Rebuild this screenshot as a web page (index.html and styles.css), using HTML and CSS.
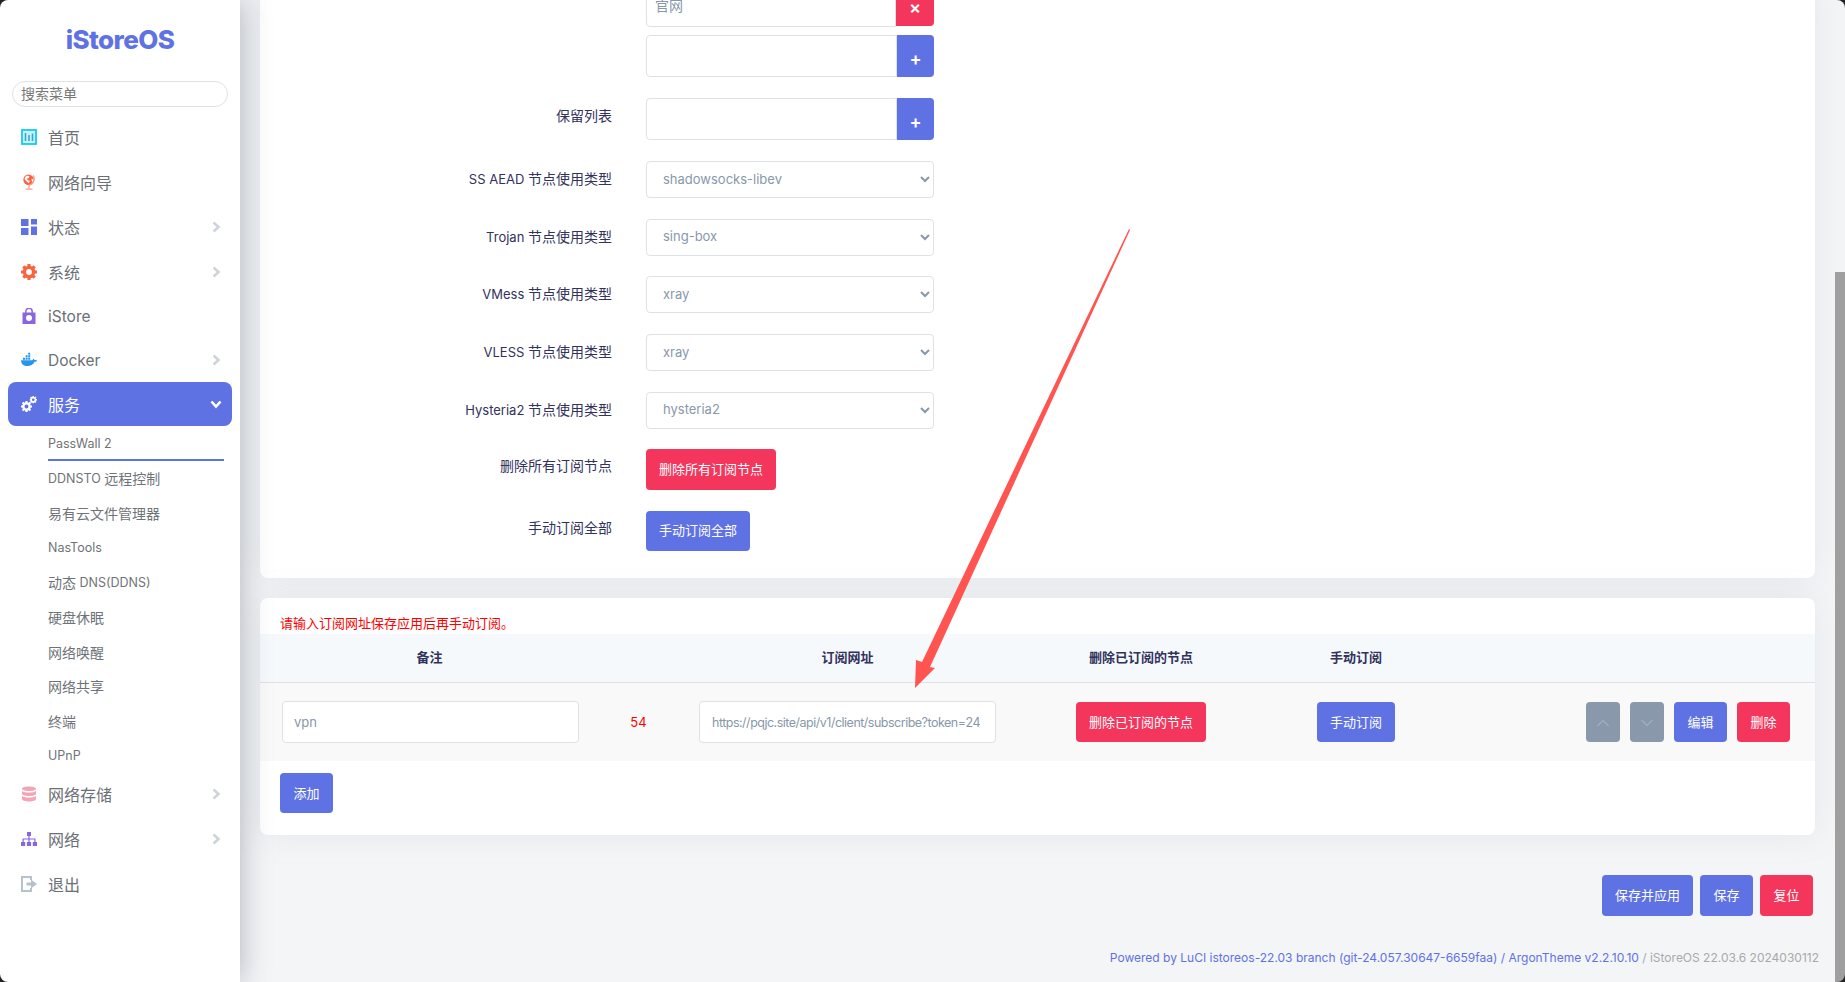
FILE: index.html
```html
<!DOCTYPE html>
<html lang="zh">
<head>
<meta charset="UTF-8">
<title>PassWall 2 - iStoreOS</title>
<link rel="stylesheet" href="styles.css">
</head>
<body>
<svg class="sprite" width="0" height="0">
  <symbol id="gear" viewBox="0 0 16 16">
    <circle cx="8" cy="8" r="4.6" fill="none" stroke="currentColor" stroke-width="3.4"/>
    <path d="M8 0v3M8 13v3M0 8h3M13 8h3M2.300 2.300l2.200 2.200M11.500 11.500l2.200 2.200M2.300 13.700l2.200-2.200M11.500 4.500l2.200-2.200" fill="none" stroke="currentColor" stroke-width="3.200"/>
  </symbol>
  <symbol id="chev" viewBox="0 0 10 12">
    <path d="M2.500 1.500 7.500 6l-5 4.500" fill="none" stroke="currentColor" stroke-width="2.600"/>
  </symbol>
</svg>

<aside class="sidebar">
  <div class="brand">iStoreOS</div>
  <input class="menu-search" type="text" placeholder="搜索菜单">
  <nav class="nav">
    <a class="nav-link">
      <svg class="nav-icon" viewBox="0 0 16 16"><rect x="1" y="1" width="14" height="14" fill="#c9f3fb" stroke="#11cdef" stroke-width="1.800"/><path d="M4.500 4v8M8 6v6M11.500 4.500V12" stroke="#3aa6d8" stroke-width="1.600"/></svg>
      首页
    </a>
    <a class="nav-link">
      <svg class="nav-icon" viewBox="0 0 16 16"><circle cx="7.500" cy="5.800" r="5.200" fill="#fb6340"/><path d="M5 2.300c1.500-.7 3-.5 3.500.3L7.500 4.300 5.800 4.800l1 1.500 2 .5L8 9.300 6.500 8.300 4 5.800 3.500 4.300zM10.500 4.800l1.500.5.300 1.500-1.300 1.500z" fill="#fff"/><path d="M12 1.500c2.500 3 1 8.500-4 10M8 11.500v3M4.500 15.200h7" fill="none" stroke="#f7a08a" stroke-width="1.300"/></svg>
      网络向导
    </a>
    <a class="nav-link">
      <svg class="nav-icon" viewBox="0 0 16 16"><path d="M0 0h7.500v7H0zM10 0h6v5.500h-6zM0 9h7.500v7H0zM10 7.500h6V16h-6z" fill="#5e72e4"/></svg>
      状态
      <svg class="nav-chev"><use href="#chev"/></svg>
    </a>
    <a class="nav-link">
      <svg class="nav-icon icon-gear"><use href="#gear"/></svg>
      系统
      <svg class="nav-chev"><use href="#chev"/></svg>
    </a>
    <a class="nav-link latin">
      <svg class="nav-icon" viewBox="0 0 16 16"><path d="M4.800 5V3.500a3.200 3.200 0 0 1 6.400 0V5" fill="none" stroke="#8965e0" stroke-width="1.500"/><path d="M1.500 4.500h13V16h-13zM8 7a3 3 0 1 0 0 6 3 3 0 0 0 0-6z" fill="#8965e0" fill-rule="evenodd"/></svg>
      iStore
    </a>
    <a class="nav-link latin">
      <svg class="nav-icon" viewBox="0 0 16 16"><path d="M0 8.200h11.200c.5-.1.900-.6.900-1.500.9.200 1.300.8 1.400 1.300.8-.2 1.600-.1 2.500.4-.6 1.100-1.500 1.400-2.500 1.400C12.300 13 9.500 14 6.500 14 2.800 14 .4 12.400 0 8.200z" fill="#2496ed"/><path d="M2 5.800h2v2H2zM4.600 5.800h2v2h-2zM7.200 5.800h2v2h-2zM4.600 3.300h2v2h-2zM7.200 3.300h2v2h-2zM7.200.8h2v2h-2z" fill="#2496ed"/></svg>
      Docker
      <svg class="nav-chev"><use href="#chev"/></svg>
    </a>
    <a class="nav-link active">
      <svg class="nav-icon" viewBox="0 0 16 16"><use href="#gear" x="0" y="5" width="11" height="11"/><use href="#gear" x="8.500" y="0" width="7.500" height="7.500"/></svg>
      服务
      <svg class="nav-chev open"><use href="#chev"/></svg>
    </a>
    <div class="subnav">
      <a class="sub-link current"><span class="lat">PassWall 2</span></a>
      <a class="sub-link"><span class="lat">DDNSTO&nbsp;</span>远程控制</a>
      <a class="sub-link">易有云文件管理器</a>
      <a class="sub-link"><span class="lat">NasTools</span></a>
      <a class="sub-link">动态<span class="lat">&nbsp;DNS(DDNS)</span></a>
      <a class="sub-link">硬盘休眠</a>
      <a class="sub-link">网络唤醒</a>
      <a class="sub-link">网络共享</a>
      <a class="sub-link">终端</a>
      <a class="sub-link"><span class="lat">UPnP</span></a>
    </div>
    <a class="nav-link">
      <svg class="nav-icon" viewBox="0 0 16 16"><path d="M1 2.800C1 1.300 4.300.5 8 .5s7 .8 7 2.300S11.700 5 8 5 1 4.300 1 2.800zM1 5c1.500 1.200 4 1.600 7 1.600S13.500 6.200 15 5v2.800C15 9.300 11.700 10 8 10S1 9.300 1 7.800zM1 10c1.500 1.200 4 1.600 7 1.600s5.500-.4 7-1.600v3c0 1.500-3.300 2.500-7 2.500S1 14.500 1 13z" fill="#f3a4b5"/></svg>
      网络存储
      <svg class="nav-chev"><use href="#chev"/></svg>
    </a>
    <a class="nav-link">
      <svg class="nav-icon" viewBox="0 0 16 16"><path d="M6 1h4v4H6zM0 11h4.200v4H0zM5.900 11h4.200v4H5.900zM11.800 11H16v4h-4.200z" fill="#8965e0"/><path d="M8 5v6M2.100 11V8h11.800v3" fill="none" stroke="#8965e0" stroke-width="1.200"/></svg>
      网络
      <svg class="nav-chev"><use href="#chev"/></svg>
    </a>
    <a class="nav-link">
      <svg class="nav-icon" viewBox="0 0 16 16"><path d="M10 4V1H1v14h9v-3" fill="none" stroke="#b7c1cc" stroke-width="2"/><path d="M5.500 6.500H10V3.500L16 8l-6 4.500v-3H5.500z" fill="#b7c1cc"/></svg>
      退出
    </a>
  </nav>
</aside>

<main class="main">
  <section class="card card-form">
    <div class="form-row">
      <div class="form-label"></div>
      <div class="dyn-item">
        <input class="text-input raised" type="text" value="官网">
        <button class="btn-icon btn-danger wide">×</button>
      </div>
    </div>
    <div class="form-row tight">
      <div class="form-label"></div>
      <div class="dyn-item">
        <input class="text-input" type="text">
        <button class="btn-icon btn-primary">+</button>
      </div>
    </div>
    <div class="form-row">
      <div class="form-label up">保留列表</div>
      <div class="dyn-item">
        <input class="text-input" type="text">
        <button class="btn-icon btn-primary">+</button>
      </div>
    </div>
    <div class="form-row select-row">
      <div class="form-label"><span class="lat">SS AEAD&nbsp;</span>节点使用类型</div>
      <select class="select-input"><option>shadowsocks-libev</option></select>
    </div>
    <div class="form-row select-row">
      <div class="form-label"><span class="lat">Trojan&nbsp;</span>节点使用类型</div>
      <select class="select-input"><option>sing-box</option></select>
    </div>
    <div class="form-row select-row">
      <div class="form-label"><span class="lat">VMess&nbsp;</span>节点使用类型</div>
      <select class="select-input"><option>xray</option></select>
    </div>
    <div class="form-row select-row">
      <div class="form-label"><span class="lat">VLESS&nbsp;</span>节点使用类型</div>
      <select class="select-input"><option>xray</option></select>
    </div>
    <div class="form-row select-row">
      <div class="form-label"><span class="lat">Hysteria2&nbsp;</span>节点使用类型</div>
      <select class="select-input"><option>hysteria2</option></select>
    </div>
    <div class="form-row">
      <div class="form-label up">删除所有订阅节点</div>
      <button class="btn btn-danger">删除所有订阅节点</button>
    </div>
    <div class="form-row last">
      <div class="form-label up">手动订阅全部</div>
      <button class="btn btn-primary">手动订阅全部</button>
    </div>
  </section>

  <section class="card card-table">
    <div class="table-note">请输入订阅网址保存应用后再手动订阅。</div>
    <div class="table-row table-head">
      <div class="head-first">备注</div>
      <div></div>
      <div>订阅网址</div>
      <div>删除已订阅的节点</div>
      <div>手动订阅</div>
      <div></div>
    </div>
    <div class="table-row table-body">
      <div><input class="text-input cell-input" type="text" value="vpn"></div>
      <div class="cell-count">54</div>
      <div><input class="text-input cell-input url" type="text" value="https://pqjc.site/api/v1/client/subscribe?token=24"></div>
      <div><button class="btn btn-danger">删除已订阅的节点</button></div>
      <div><button class="btn btn-primary">手动订阅</button></div>
      <div class="cell-actions">
        <button class="btn btn-muted"><svg width="14" height="8" viewBox="0 0 14 8"><path d="M1.500 7 7 1.500 12.500 7" fill="none" stroke="#a3afbe" stroke-width="1.200"/></svg></button>
        <button class="btn btn-muted"><svg width="14" height="8" viewBox="0 0 14 8"><path d="M1.500 1 7 6.500 12.500 1" fill="none" stroke="#a3afbe" stroke-width="1.200"/></svg></button>
        <button class="btn btn-primary btn-short">编辑</button>
        <button class="btn btn-danger btn-short">删除</button>
      </div>
    </div>
    <button class="btn btn-primary btn-add btn-short">添加</button>
  </section>

  <div class="page-actions">
    <button class="btn btn-primary">保存并应用</button>
    <button class="btn btn-primary btn-short">保存</button>
    <button class="btn btn-danger btn-short">复位</button>
  </div>

  <footer class="footer">
    <span class="footer-link">Powered by LuCI istoreos-22.03 branch (git-24.057.30647-6659faa) / ArgonTheme v2.2.10.10</span> / iStoreOS 22.03.6 2024030112
  </footer>
</main>

<div class="scroll-thumb"></div>

<svg class="annotation" viewBox="0 0 1845 982">
  <polygon points="1129,229 1130,230 930,667 935,668 915,688 916,660 922,662" fill="#ff5450"/>
</svg>

<div class="window-frame"></div>
</body>
</html>
```

FILE: styles.css
```css
* {
  box-sizing: border-box;
}
html, body {
  height: 100%;
}
body {
  display: flex;
  margin: 0;
  overflow: hidden;
  background-color: #f4f5f7;
  color: #32325d;
  font-family: Inter, "Noto Sans CJK SC", sans-serif;
  font-size: 14px;
}
.sprite {
  position: absolute;
}

/* sidebar */
.sidebar {
  flex: 0 0 240px;
  height: 100%;
  padding-top: 27px;
  background-color: #fff;
  box-shadow: 0 0 28px rgba(40, 50, 70, 0.35);
  position: relative;
  z-index: 2;
}
.brand {
  height: 26px;
  margin-bottom: 28px;
  color: #5e72e4;
  font-size: 26px;
  font-weight: 800;
  line-height: 26px;
  letter-spacing: -0.6px;
  text-align: center;
}
.menu-search {
  display: block;
  width: 216px;
  height: 26px;
  margin: 0 0 7px 12px;
  padding: 0 8px 2px;
  border: 1px solid #dee2e6;
  border-radius: 13px;
  background: #fff;
  font-family: inherit;
  font-size: 14px;
}
.menu-search::placeholder {
  color: #777;
}
.nav-link {
  display: flex;
  align-items: center;
  height: 45px;
  margin: 0 8px;
  padding-left: 13px;
  border-radius: 8px;
  color: #6b6f76;
  font-size: 16px;
}
.nav-link.latin {
  height: 44px;
  font-size: 15.500px;
}
.nav-link.active {
  height: 44px;
  background-color: #5e72e4;
  color: #fff;
}
.nav-icon {
  flex: none;
  width: 16px;
  height: 16px;
  margin-right: 11px;
}
.icon-gear {
  color: #fb6340;
}
.nav-chev {
  width: 10px;
  height: 12px;
  margin-left: auto;
  margin-right: 11px;
  color: #ced4da;
}
.nav-chev.open {
  color: #fff;
  transform: rotate(90deg);
}
.subnav {
  padding-top: 1px;
}
.sub-link {
  display: flex;
  align-items: center;
  height: 34.700px;
  margin: 0 16px 0 48px;
  color: #6f7378;
  font-size: 14px;
}
.sub-link .lat {
  font-size: 12.500px;
}
.sub-link.current {
  height: 34px;
  border-bottom: 2px solid #5e72e4;
}
.sub-link:last-child {
  height: 33px;
}

/* main column */
.main {
  flex: 1;
  min-width: 0;
  padding: 0 30px 0 20px;
}
.card {
  border-radius: 8px;
  background-color: #fff;
  box-shadow: 0 0 32px rgba(136, 152, 170, 0.15);
}
.card-form {
  margin-top: -15px;
  padding: 0 0 27px;
  height: 593px;
}
.form-row {
  display: flex;
  align-items: center;
  gap: 34px;
  margin-bottom: 21px;
}
.form-row.tight {
  margin-top: -13px;
}
.form-row.select-row {
  height: 37.600px;
  margin-bottom: 20px;
}
.form-row.last {
  margin-bottom: 0;
}
.form-label {
  flex: 0 0 352px;
  text-align: right;
  font-size: 14px;
  color: #32325d;
}
.form-label .lat {
  font-size: 13px;
}
.form-label.up {
  margin-bottom: 8px;
}
.select-row .form-label {
  margin-bottom: 3px;
}
.dyn-item {
  display: flex;
  width: 288px;
  height: 42px;
}
.text-input,
.select-input {
  border: 1px solid #dee2e6;
  border-radius: 4px;
  background-color: #fff;
  color: #8898aa;
  font-family: inherit;
  font-size: 13px;
}
.dyn-item .text-input {
  flex: 1;
  min-width: 0;
  padding: 0 8px;
  border-radius: 4px 0 0 4px;
  font-size: 14px;
}
.dyn-item .text-input.raised {
  padding-bottom: 3px;
}
.select-input {
  width: 288px;
  height: 37px;
  padding: 0 12px 2px;
  font-size: 13px;
}
.btn-icon {
  flex: 0 0 37px;
  padding: 4px 0 0;
  border: 0;
  border-radius: 0 4px 4px 0;
  color: #fff;
  font-family: inherit;
  font-size: 18px;
  font-weight: 600;
}
.btn-icon.wide {
  flex-basis: 38px;
}
.btn {
  height: 40px;
  padding: 0 13px 2px;
  border: 0;
  border-radius: 4px;
  color: #fff;
  font-family: inherit;
  font-size: 13px;
  white-space: nowrap;
}
.btn-short {
  width: 53px;
  padding-right: 0;
  padding-left: 0;
}
.form-row .btn-danger {
  height: 41px;
}
.btn-primary {
  background-color: #5e72e4;
}
.btn-danger {
  background-color: #f5365c;
}
.btn-muted {
  width: 34px;
  padding: 0;
  background-color: #8a98ab;
}

/* subscribe table */
.card-table {
  height: 237px;
  margin-top: 20px;
}
.table-note {
  height: 36px;
  padding: 16px 0 0 20px;
  color: #f00;
  font-size: 13px;
  line-height: 18px;
}
.table-row {
  display: grid;
  grid-template-columns: 341px 75px 343px 244px 186px 1fr;
  align-items: center;
  text-align: center;
}
.table-head {
  height: 49px;
  padding-bottom: 3px;
  border-bottom: 1px solid #dee2e6;
  background-color: #f6f9fc;
  font-size: 13px;
  font-weight: 600;
}
.head-first {
  padding-right: 2px;
}
.table-body {
  height: 78px;
  background-color: #f9f9f9;
}
.cell-input {
  display: block;
  width: 297px;
  height: 42px;
  margin: 0 auto;
  padding: 0 11px;
}
.cell-input.url {
  padding: 0 12px;
  font-size: 12.500px;
  letter-spacing: -0.5px;
}
.cell-count {
  color: #f00;
  font-size: 13px;
}
.cell-actions {
  display: flex;
  justify-content: flex-end;
  gap: 10px;
  padding-right: 25px;
}
.btn-add {
  display: block;
  margin: 12px 0 0 20px;
}

/* bottom of page */
.page-actions {
  display: flex;
  justify-content: flex-end;
  gap: 7px;
  margin: 40px 2px 0 0;
}
.page-actions .btn {
  height: 41px;
}
.footer {
  margin: 33px -4px 0 0;
  color: #a9a9a9;
  font-size: 12px;
  line-height: 18px;
  text-align: right;
}
.footer-link {
  color: #5e72e4;
}

/* things laid over the page */
.scroll-thumb {
  position: fixed;
  top: 272px;
  right: 0;
  bottom: 0;
  width: 10px;
  background-color: #9f9f9f;
}
.annotation {
  position: fixed;
  inset: 0;
  width: 100%;
  height: 100%;
  z-index: 3;
  pointer-events: none;
}
.window-frame {
  position: fixed;
  inset: 0;
  border-radius: 8px;
  box-shadow: 0 0 0 20px #222;
  z-index: 4;
  pointer-events: none;
}
```
